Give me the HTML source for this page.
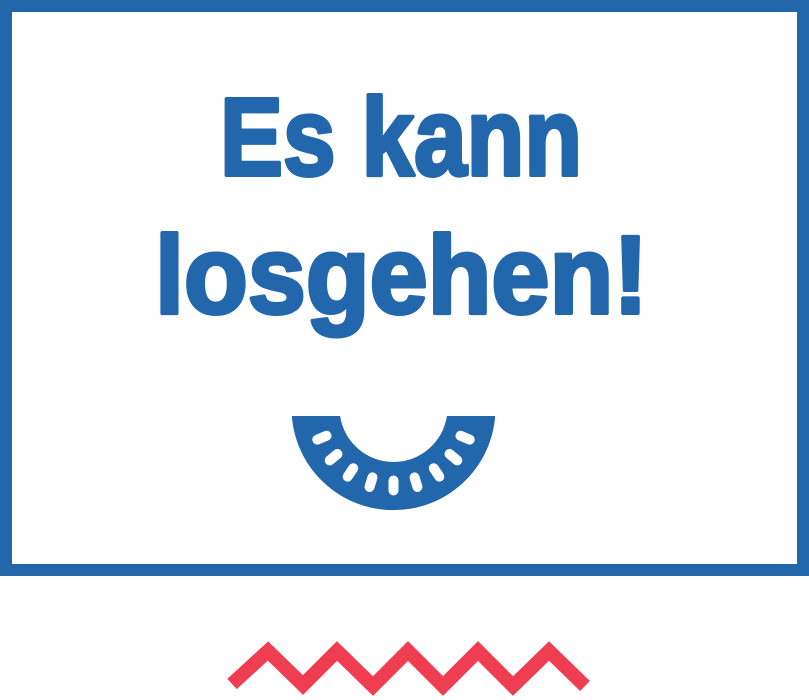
<!DOCTYPE html>
<html><head><meta charset="utf-8"><style>
html,body{margin:0;padding:0;background:#fff;width:809px;height:700px;overflow:hidden}
</style></head><body>
<svg width="809" height="700" viewBox="0 0 809 700" xmlns="http://www.w3.org/2000/svg">
<rect x="6" y="6" width="797" height="564" fill="#fff" stroke="#2266ac" stroke-width="12"/>
<g fill="#2266ac" stroke="#2266ac" stroke-width="4" stroke-linejoin="round" font-family="Liberation Sans, sans-serif" font-weight="bold" font-size="110">
<text x="220" y="175" textLength="362" lengthAdjust="spacingAndGlyphs">Es kann</text>
<text x="155" y="313" textLength="493" lengthAdjust="spacingAndGlyphs">losgehen!</text>
</g>
<path d="M291.8,416 L340.1,416 A54,54 0 0 0 446.9,416 L495.2,416 A102,102 0 0 1 291.8,416 Z" fill="#2266ac"/>
<g transform="translate(393.5,408)" stroke="#fff" stroke-width="10" stroke-linecap="round">
<line x1="72.5" y1="0" x2="82.5" y2="0" transform="rotate(22.5)"/>
<line x1="72.5" y1="0" x2="82.5" y2="0" transform="rotate(39.375)"/>
<line x1="72.5" y1="0" x2="82.5" y2="0" transform="rotate(56.25)"/>
<line x1="72.5" y1="0" x2="82.5" y2="0" transform="rotate(73.125)"/>
<line x1="72.5" y1="0" x2="82.5" y2="0" transform="rotate(90)"/>
<line x1="72.5" y1="0" x2="82.5" y2="0" transform="rotate(106.875)"/>
<line x1="72.5" y1="0" x2="82.5" y2="0" transform="rotate(123.75)"/>
<line x1="72.5" y1="0" x2="82.5" y2="0" transform="rotate(140.625)"/>
<line x1="72.5" y1="0" x2="82.5" y2="0" transform="rotate(157.5)"/>
</g>
<polyline points="232,684 268,651 303,685 337,651 373,686 408,651 443,686 478,651 513,686 549,651 585,686" fill="none" stroke="#ef3e52" stroke-width="14" stroke-linejoin="miter"/>
</svg>
</body></html>
